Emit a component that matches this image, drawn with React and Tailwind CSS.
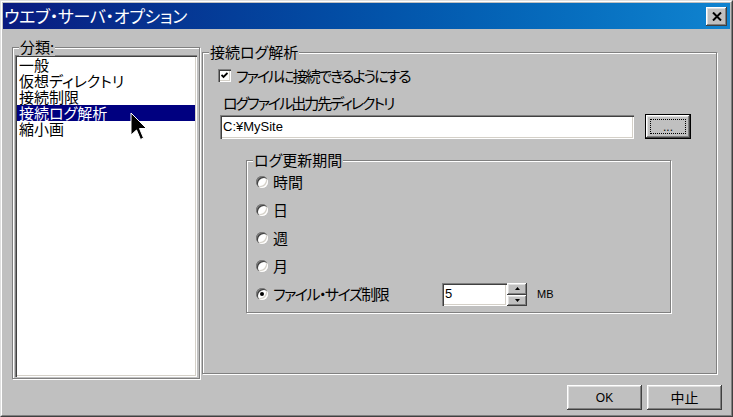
import React from "react";

// classic 3D bevels
const RAISED =
  "shadow-[inset_-1px_-1px_0_#404040,inset_1px_1px_0_#ffffff,inset_-2px_-2px_0_#808080,inset_2px_2px_0_#dfdfdf]";
const SUNKEN =
  "shadow-[inset_1px_1px_0_#808080,inset_2px_2px_0_#404040,inset_-1px_-1px_0_#ffffff,inset_-2px_-2px_0_#d4d0c8]";
const ETCHED = "border border-[#808080] shadow-[inset_1px_1px_0_#ffffff,1px_1px_0_#ffffff]";
const JP = "font-['Noto_Sans_CJK_JP',sans-serif] [font-feature-settings:'palt']";
const LATIN = "font-['Liberation_Sans',Arial,sans-serif]";

const categories = ["一般", "仮想ディレクトリ", "接続制限", "接続ログ解析", "縮小画"];
const periods = ["時間", "日", "週", "月"];

const GroupLabel = ({ children }) => (
  <span className="absolute left-[6px] top-[-10px] px-[1px] bg-[#c0c0c0] text-[15px] leading-[18px] text-black">
    {children}
  </span>
);

const Radio = ({ checked }) => (
  <span className={`relative w-[12px] h-[12px] shrink-0 rounded-full bg-white ${SUNKEN}`}>
    {checked && <span className="absolute left-[4px] top-[4px] w-[4px] h-[4px] rounded-full bg-black" />}
  </span>
);

const Button = ({ children, className = "" }) => (
  <button className={`w-[75px] h-[25px] bg-[#c0c0c0] flex items-center justify-center text-black ${RAISED} ${className}`}>
    {children}
  </button>
);

export default function App() {
  return (
    <div className={`relative w-[733px] h-[417px] bg-[#c0c0c0] border border-t-[#dfdfdf] border-l-[#dfdfdf] border-r-[#404040] border-b-[#404040] ${JP}`}>
      <div className="h-full border border-t-white border-l-white border-r-[#808080] border-b-[#808080] p-px flex flex-col">
        {/* title bar */}
        <div className="h-[26px] shrink-0 flex items-center bg-gradient-to-r from-[#0a1a80] to-[#1084d0] pl-[1px] pr-[3px]">
          <span className="text-white text-[17px] leading-[26px] flex-1 tracking-[-0.3px]">ウエブ・サーバ・オプション</span>
          <button className={`w-[21px] h-[19px] bg-[#c0c0c0] flex items-center justify-center ${RAISED}`}>
            <svg width="10" height="9" viewBox="0 0 10 9">
              <path d="M1 0.5 L9 8.5 M9 0.5 L1 8.5" stroke="#000" strokeWidth="2" />
            </svg>
          </button>
        </div>

        {/* body */}
        <div className="flex items-start">
          {/* 分類 */}
          <div className={`relative ml-[9px] mt-[18px] w-[188px] h-[332px] ${ETCHED}`}>
            <GroupLabel>分類:</GroupLabel>
            <div className={`ml-[2px] mt-[7px] w-[182px] h-[322px] bg-white p-[2px] ${SUNKEN}`}>
              {categories.map((c) => (
                <div
                  key={c}
                  className={`h-[16px] pl-[2px] text-[15px] leading-[16px] ${
                    c === "接続ログ解析" ? "bg-[#000080] text-white" : "text-black"
                  }`}
                >
                  {c}
                </div>
              ))}
            </div>
          </div>

          {/* right side */}
          <div className="ml-[2px] w-[520px] flex flex-col">
            <div className={`relative mt-[23px] w-[515px] h-[322px] ${ETCHED} flex flex-col pl-[15px] text-black`}>
              <GroupLabel>接続ログ解析</GroupLabel>

              <div className="mt-[16px] h-[13px] flex items-center gap-[5px]">
                <span className={`w-[13px] h-[13px] bg-white flex items-center justify-center ${SUNKEN}`}>
                  <svg width="7" height="7" viewBox="0 0 7 7">
                    <path d="M0.5 3 L2.5 5 L6.5 1" stroke="#000" strokeWidth="1.8" fill="none" />
                  </svg>
                </span>
                <span className="text-[15px] leading-[16px] tracking-[-2px]">ファイルに接続できるようにする</span>
              </div>

              <div className="mt-[13px] h-[16px] ml-[5px] text-[15px] leading-[16px] tracking-[-2px]">ログファイル出力先ディレクトリ</div>

              <div className="mt-[3px] flex items-start">
                <div className={`mt-[1px] ml-[2px] w-[414px] h-[24px] bg-white flex items-center pl-[3px] text-[13px] ${LATIN} ${SUNKEN}`}>
                  C:¥MySite
                </div>
                <button className="ml-[11px] w-[46px] h-[25px] border border-black bg-[#c0c0c0]">
                  <span className={`flex w-full h-full items-center justify-center ${RAISED}`}>
                    <span className={`flex items-center justify-center w-[36px] h-[15px] border border-dotted border-black text-[12px] leading-[12px] ${LATIN}`}>
                      ...
                    </span>
                  </span>
                </button>
              </div>

              <div className={`relative mt-[21px] ml-[28px] w-[425px] h-[153px] ${ETCHED} pt-[7px] pl-[9px]`}>
                <GroupLabel>ログ更新期間</GroupLabel>
                {periods.map((p) => (
                  <div key={p} className="h-[28px] flex items-center">
                    <Radio />
                    <span className="ml-[5px] text-[15px] leading-[16px]">{p}</span>
                  </div>
                ))}
                <div className="h-[28px] flex items-center">
                  <div className="w-[186px] flex items-center">
                    <Radio checked />
                    <span className="ml-[5px] text-[15px] leading-[16px] tracking-[-1.5px]">ファイル・サイズ制限</span>
                  </div>
                  <div className={`w-[65px] h-[23px] bg-white flex items-center pl-[3px] text-[13px] ${LATIN} ${SUNKEN}`}>5</div>
                  <div className="w-[20px] h-[23px] flex flex-col">
                    <div className={`h-[12px] bg-[#c0c0c0] flex items-center justify-center ${RAISED}`}>
                      <svg width="5" height="3" viewBox="0 0 5 3"><path d="M2.5 0 L5 3 L0 3 Z" fill="#000" /></svg>
                    </div>
                    <div className={`h-[11px] bg-[#c0c0c0] flex items-center justify-center ${RAISED}`}>
                      <svg width="5" height="3" viewBox="0 0 5 3"><path d="M0 0 L5 0 L2.5 3 Z" fill="#000" /></svg>
                    </div>
                  </div>
                  <span className={`ml-[10px] text-[11px] ${LATIN}`}>MB</span>
                </div>
              </div>
            </div>

            <div className="mt-[11px] flex justify-end gap-[5px]">
              <Button className={`text-[12px] ${LATIN}`}>OK</Button>
              <Button className="text-[14px]">中止</Button>
            </div>
          </div>
        </div>
      </div>

      {/* mouse pointer */}
      <svg className="absolute left-[129px] top-[111px]" width="18" height="30" viewBox="0 0 18 30">
        <path d="M1 1 L1 23 L6.5 18 L10.5 27.5 L13.5 26 L9.5 16.5 L16.5 16.5 Z" fill="#000" stroke="#fff" strokeWidth="1" />
      </svg>
    </div>
  );
}
